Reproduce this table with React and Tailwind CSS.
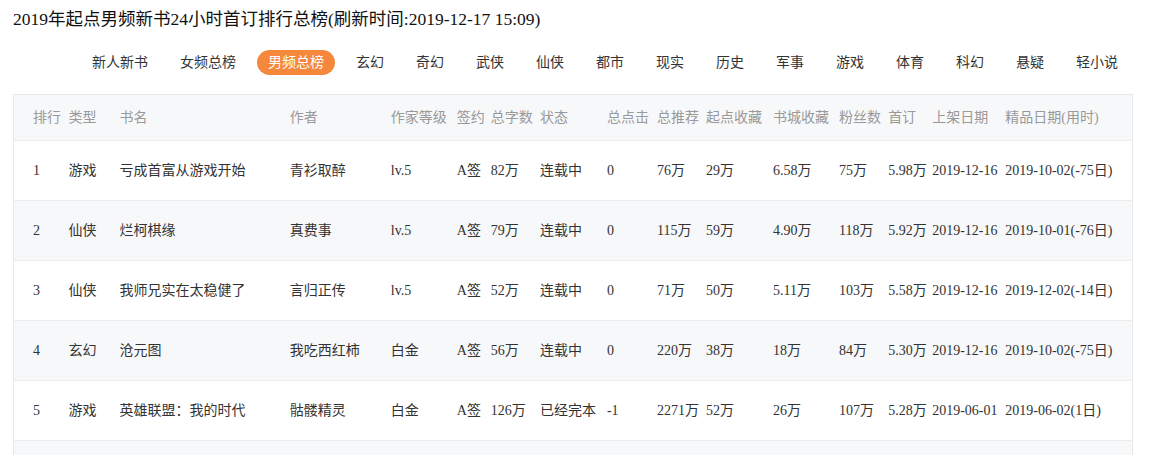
import React from 'react';

const tabs = ['新人新书', '女频总榜', '男频总榜', '玄幻', '奇幻', '武侠', '仙侠', '都市', '现实', '历史', '军事', '游戏', '体育', '科幻', '悬疑', '轻小说'];

const cols = [55, 51, 170, 101, 66, 34, 49, 67, 50, 49, 67, 66, 49, 44, 73, 127];

const headers = ['排行', '类型', '书名', '作者', '作家等级', '签约', '总字数', '状态', '总点击', '总推荐', '起点收藏', '书城收藏', '粉丝数', '首订', '上架日期', '精品日期(用时)'];

const rows = [
  ['1', '游戏', '亏成首富从游戏开始', '青衫取醉', 'lv.5', 'A签', '82万', '连载中', '0', '76万', '29万', '6.58万', '75万', '5.98万', '2019-12-16', '2019-10-02(-75日)'],
  ['2', '仙侠', '烂柯棋缘', '真费事', 'lv.5', 'A签', '79万', '连载中', '0', '115万', '59万', '4.90万', '118万', '5.92万', '2019-12-16', '2019-10-01(-76日)'],
  ['3', '仙侠', '我师兄实在太稳健了', '言归正传', 'lv.5', 'A签', '52万', '连载中', '0', '71万', '50万', '5.11万', '103万', '5.58万', '2019-12-16', '2019-12-02(-14日)'],
  ['4', '玄幻', '沧元图', '我吃西红柿', '白金', 'A签', '56万', '连载中', '0', '220万', '38万', '18万', '84万', '5.30万', '2019-12-16', '2019-10-02(-75日)'],
  ['5', '游戏', '英雄联盟：我的时代', '骷髅精灵', '白金', 'A签', '126万', '已经完本', '-1', '2271万', '52万', '26万', '107万', '5.28万', '2019-06-01', '2019-06-02(1日)'],
  ['', '', '', '', '', '', '', '', '', '', '', '', '', '', '', ''],
];

const font = { fontFamily: '"Liberation Serif", "Noto Sans CJK SC", serif' };

export default function App() {
  return (
    <div className="w-[1166px] h-[455px] overflow-hidden bg-white px-[13px]" style={font}>
      <h1 className="pt-[7px] text-[17.5px] leading-6 text-[#111] font-normal">
        2019年起点男频新书24小时首订排行总榜(刷新时间:2019-12-17 15:09)
      </h1>
      <div className="flex gap-[10px] pl-[68px] mt-[19px]">
        {tabs.map((t) => (
          <span
            key={t}
            className={
              t === '男频总榜'
                ? 'h-[25px] px-[11px] rounded-full bg-[#f5883c] text-white text-[14px] leading-[25px]'
                : 'h-[25px] px-[11px] text-[#333] text-[14px] leading-[25px]'
            }
          >
            {t}
          </span>
        ))}
      </div>
      <table className="mt-[19px] w-[1120px] table-fixed border-collapse border border-[#e8e8e8] text-[14px]">
        <colgroup>
          {cols.map((w, i) => (
            <col key={i} style={{ width: w }} />
          ))}
        </colgroup>
        <thead>
          <tr className="h-[46px] bg-[#f7f8fa] border-b border-[#ececec]">
            {headers.map((h, i) => (
              <th key={h} className={`text-left font-normal text-[#999] whitespace-nowrap p-0 ${i === 0 ? 'pl-[19px]' : ''}`}>
                {h}
              </th>
            ))}
          </tr>
        </thead>
        <tbody>
          {rows.map((r, ri) => (
            <tr key={ri} className={`h-[60px] border-b border-[#ececec] ${ri % 2 === 1 ? 'bg-[#f7f8fa]' : 'bg-white'}`}>
              {r.map((c, i) => (
                <td key={i} className={`text-[#333] whitespace-nowrap p-0 ${i === 0 ? 'pl-[19px]' : ''}`}>
                  {c}
                </td>
              ))}
            </tr>
          ))}
        </tbody>
      </table>
    </div>
  );
}
